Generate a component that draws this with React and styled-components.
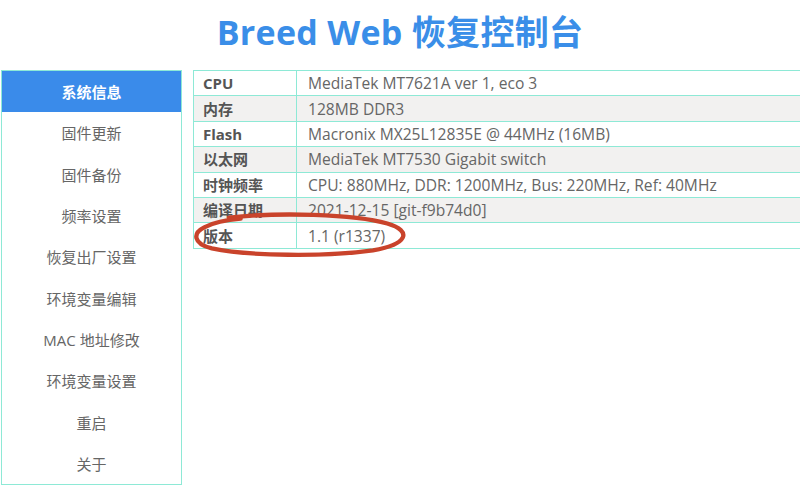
import React from "react";
import styled, { createGlobalStyle } from "styled-components";

const GlobalStyle = createGlobalStyle`
  html, body {
    margin: 0;
    padding: 0;
    background: #fff;
    overflow: hidden;
  }
  body {
    font-family: "Open Sans", "Noto Sans CJK SC", sans-serif;
  }
`;

const menu = [
  "系统信息",
  "固件更新",
  "固件备份",
  "频率设置",
  "恢复出厂设置",
  "环境变量编辑",
  "MAC 地址修改",
  "环境变量设置",
  "重启",
  "关于",
];

const info = [
  ["CPU", "MediaTek MT7621A ver 1, eco 3"],
  ["内存", "128MB DDR3"],
  ["Flash", "Macronix MX25L12835E @ 44MHz (16MB)"],
  ["以太网", "MediaTek MT7530 Gigabit switch"],
  ["时钟频率", "CPU: 880MHz, DDR: 1200MHz, Bus: 220MHz, Ref: 40MHz"],
  ["编译日期", "2021-12-15 [git-f9b74d0]"],
  ["版本", "1.1 (r1337)"],
];

const App = () => {
  return (
    <Page>
      <GlobalStyle />
      <Title>Breed Web 恢复控制台</Title>
      <Body>
        <Sidebar>
          {menu.map((item, i) => (
            <MenuItem key={item} $active={i === 0}>
              {item}
            </MenuItem>
          ))}
        </Sidebar>
        <Main>
          <InfoTable>
            <tbody>
              {info.map(([label, value], i) => (
                <Row key={label} $odd={i % 2 === 1}>
                  <Label>{label}</Label>
                  <Value>{value}</Value>
                </Row>
              ))}
            </tbody>
          </InfoTable>
          <Mark viewBox="0 0 230 48" aria-hidden="true">
            <path
              d="M40 6 C 90 0, 170 2, 205 12 C 232 20, 226 34, 190 40 C 140 47, 60 46, 22 38 C 2 33, 2 22, 14 16 C 24 11, 40 8, 52 7"
              fill="none"
              stroke="#c9432b"
              strokeWidth="4.5"
              strokeLinecap="round"
            />
          </Mark>
        </Main>
      </Body>
    </Page>
  );
};

export default App;

const Page = styled.div`
  width: 800px;
  height: 486px;
  overflow: hidden;
`;

const Title = styled.h1`
  margin: 0;
  height: 70px;
  line-height: 64px;
  text-align: center;
  font-family: "Open Sans", "Noto Sans CJK SC", sans-serif;
  font-size: 34px;
  font-weight: 700;
  color: #3a8ee8;
  letter-spacing: 0.3px;
`;

const Body = styled.div`
  display: flex;
  align-items: flex-start;
  gap: 11px;
  padding-left: 1px;
`;

const Sidebar = styled.ul`
  list-style: none;
  margin: 0;
  padding: 0;
  width: 179px;
  height: 413px;
  border: 1px solid #8ee9d6;
  display: flex;
  flex-direction: column;
`;

const MenuItem = styled.li`
  height: 41.4px;
  display: flex;
  align-items: center;
  justify-content: center;
  font-size: 15px;
  font-weight: ${(p) => (p.$active ? 700 : 400)};
  color: ${(p) => (p.$active ? "#fff" : "#666")};
  background: ${(p) => (p.$active ? "#3a8bea" : "transparent")};
`;

const Main = styled.div`
  position: relative;
  flex: 1;
  margin-right: -2px;
`;

const InfoTable = styled.table`
  width: 100%;
  border-collapse: collapse;
  font-size: 15px;
  line-height: 20px;
`;

const Row = styled.tr`
  background: ${(p) => (p.$odd ? "#f2f1f0" : "#fff")};
`;

const Label = styled.td`
  width: 93px;
  height: 24.4px;
  padding: 0 0 0 9px;
  border: 1px solid #8ee9d6;
  font-weight: 700;
  color: #555;
  white-space: nowrap;
`;

const Value = styled.td`
  padding: 0 0 0 11px;
  border: 1px solid #8ee9d6;
  font-size: 15.6px;
  color: #666;
  white-space: nowrap;
`;

/* red hand-drawn ring around the version row */
const Mark = styled.svg`
  position: absolute;
  left: -3px;
  top: 142px;
  width: 222px;
  height: 46px;
  overflow: visible;
  pointer-events: none;
`;
